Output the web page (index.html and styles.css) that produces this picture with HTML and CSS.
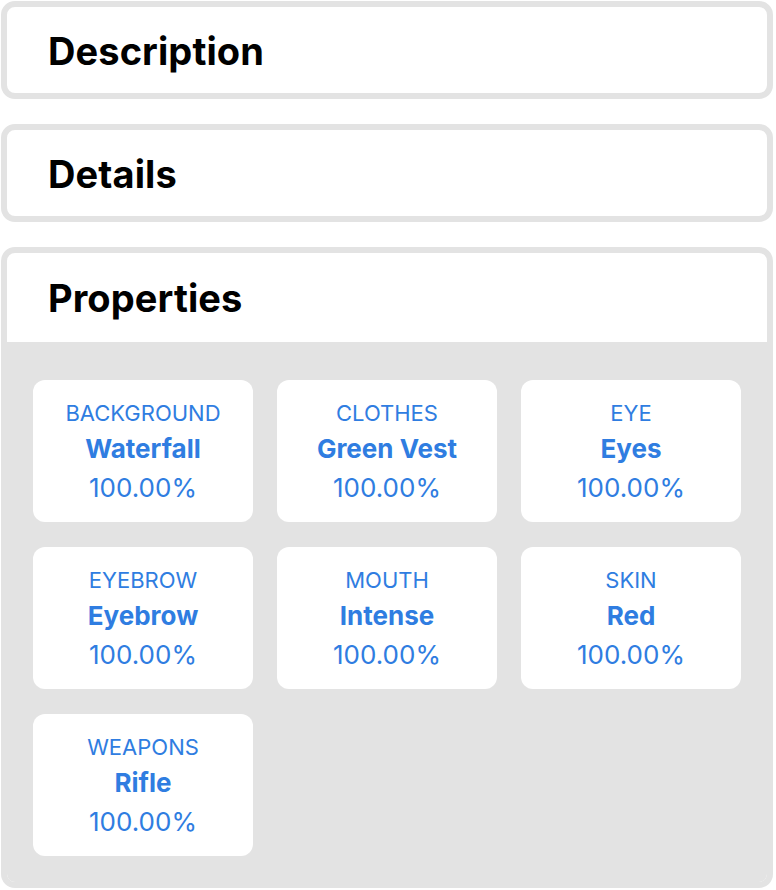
FILE: index.html
```html
<!DOCTYPE html>
<html>
<head>
<meta charset="utf-8">
<link rel="stylesheet" href="styles.css">
</head>
<body>
<div class="page">
  <section class="card">
    <div class="card-header"><h2 class="card-title">Description</h2></div>
  </section>
  <section class="card">
    <div class="card-header"><h2 class="card-title">Details</h2></div>
  </section>
  <section class="card">
    <div class="card-header"><h2 class="card-title">Properties</h2></div>
    <div class="props">
      <div class="prop"><div class="prop-type">BACKGROUND</div><div class="prop-value">Waterfall</div><div class="prop-rarity">100.00%</div></div>
      <div class="prop"><div class="prop-type">CLOTHES</div><div class="prop-value">Green Vest</div><div class="prop-rarity">100.00%</div></div>
      <div class="prop"><div class="prop-type">EYE</div><div class="prop-value">Eyes</div><div class="prop-rarity">100.00%</div></div>
      <div class="prop"><div class="prop-type">EYEBROW</div><div class="prop-value">Eyebrow</div><div class="prop-rarity">100.00%</div></div>
      <div class="prop"><div class="prop-type">MOUTH</div><div class="prop-value">Intense</div><div class="prop-rarity">100.00%</div></div>
      <div class="prop"><div class="prop-type">SKIN</div><div class="prop-value">Red</div><div class="prop-rarity">100.00%</div></div>
      <div class="prop"><div class="prop-type">WEAPONS</div><div class="prop-value">Rifle</div><div class="prop-rarity">100.00%</div></div>
    </div>
  </section>
</div>
</body>
</html>
```
FILE: styles.css
```css
html, body {
  margin: 0;
  padding: 0;
  background: #ffffff;
}
body {
  font-family: Inter, "Liberation Sans", sans-serif;
  color: #000;
}
.page {
  display: flex;
  flex-direction: column;
  gap: 25px;
  padding: 1px 3px 2px 1px;
}
.card {
  border: 6px solid #e3e3e3;
  border-radius: 14px;
  overflow: hidden;
  background: #fff;
}
.card-header {
  height: 86px;
  display: flex;
  align-items: center;
  padding-left: 41px;
  padding-top: 1px;
  box-sizing: border-box;
}
.card-title {
  margin: 0;
  font-size: 38px;
  font-weight: 700;
  letter-spacing: 0.1px;
}
.card:last-child .card-header {
  height: 89px;
}
.props {
  background: #e3e3e3;
  padding: 38px 26px 26px 26px;
  display: grid;
  grid-template-columns: repeat(3, 1fr);
  gap: 25px 24px;
}
.prop {
  background: #fff;
  border-radius: 12px;
  height: 142px;
  box-sizing: border-box;
  padding-top: 18px;
  text-align: center;
  color: #2f7de1;
}
.prop-type {
  font-size: 22px;
  line-height: 30px;
}
.prop-value {
  font-size: 26px;
  font-weight: 700;
  line-height: 42px;
}
.prop-rarity {
  font-size: 26px;
  line-height: 36px;
}
```
